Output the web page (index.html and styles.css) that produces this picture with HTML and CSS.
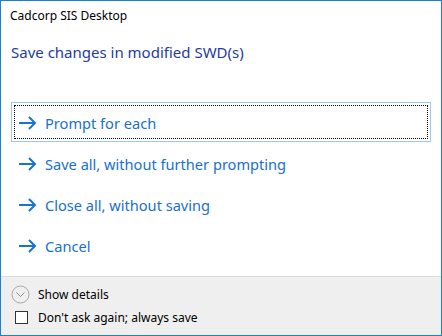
FILE: index.html
```html
<!DOCTYPE html>
<html lang="en">
<head>
    <meta charset="UTF-8">
    <title>Cadcorp SIS Desktop</title>
    <link rel="stylesheet" href="styles.css">
</head>
<body>
    <div class="window">
        <div class="titlebar">Cadcorp SIS Desktop</div>

        <div class="content">
            <h1 class="instruction">Save changes in modified SWD(s)</h1>

            <div class="commands">
                <button class="command focused">
                    <svg class="arrow" width="18" height="14" viewBox="0 0 18 14"><path d="M0 7H16M10 1L16 7L10 13" fill="none" stroke="currentColor" stroke-width="2"/></svg>
                    <span>Prompt for each</span>
                </button>
                <button class="command">
                    <svg class="arrow" width="18" height="14" viewBox="0 0 18 14"><path d="M0 7H16M10 1L16 7L10 13" fill="none" stroke="currentColor" stroke-width="2"/></svg>
                    <span>Save all, without further prompting</span>
                </button>
                <button class="command">
                    <svg class="arrow" width="18" height="14" viewBox="0 0 18 14"><path d="M0 7H16M10 1L16 7L10 13" fill="none" stroke="currentColor" stroke-width="2"/></svg>
                    <span>Close all, without saving</span>
                </button>
                <button class="command">
                    <svg class="arrow" width="18" height="14" viewBox="0 0 18 14"><path d="M0 7H16M10 1L16 7L10 13" fill="none" stroke="currentColor" stroke-width="2"/></svg>
                    <span>Cancel</span>
                </button>
            </div>
        </div>

        <div class="footer">
            <div class="footer-row">
                <svg class="expander" width="19" height="19" viewBox="0 0 19 19">
                    <circle cx="9.5" cy="9.5" r="8.5" fill="none" stroke="#a8a8a8" stroke-width="1"/>
                    <path d="M5.5 7.5L9.5 11.5L13.5 7.5" fill="none" stroke="#8c8c8c" stroke-width="1"/>
                </svg>
                <span>Show details</span>
            </div>
            <label class="footer-row">
                <span class="checkbox"></span>
                <span>Don't ask again; always save</span>
            </label>
        </div>
    </div>
</body>
</html>
```

FILE: styles.css
```css
* {
    margin: 0;
    padding: 0;
    box-sizing: border-box;
}

body {
    font-family: "Noto Sans", "Open Sans", sans-serif;
    background: #ffffff;
}

.window {
    width: 442px;
    height: 336px;
    border: 1px solid #1c80d4;
    background: #ffffff;
    display: flex;
    flex-direction: column;
}

.titlebar {
    height: 29px;
    padding: 6px 0 0 9px;
    font-size: 12px;
    color: #000000;
}

.content {
    flex: 1;
    padding: 0 10px 0 10px;
}

.instruction {
    font-size: 15px;
    font-weight: normal;
    color: #1e3c9e;
    padding-top: 12px;
    height: 72px;
}

.commands {
    display: flex;
    flex-direction: column;
    gap: 1px;
}

.command {
    height: 40px;
    display: flex;
    align-items: center;
    gap: 8px;
    padding: 2px 0 0 7px;
    border: 1px solid transparent;
    background: none;
    font-family: inherit;
    font-size: 14.6px;
    color: #1a6fcf;
    text-align: left;
    position: relative;
}

.command.focused {
    border-color: #99c9f0;
}

.command.focused::after {
    content: "";
    position: absolute;
    top: 2px;
    left: 2px;
    right: 2px;
    bottom: 2px;
    border: 1px dotted #000000;
}

.arrow {
    color: #1a73d2;
    flex-shrink: 0;
}

.footer {
    height: 59px;
    background: #efefef;
    border-top: 1px solid #dcdcdc;
    padding: 6px 0 0 10px;
    font-size: 12px;
    color: #000000;
}

.footer-row {
    display: flex;
    align-items: center;
    gap: 8px;
    height: 23px;
}

.expander {
    flex-shrink: 0;
}

.checkbox {
    width: 13px;
    height: 13px;
    border: 1px solid #333333;
    background: #ffffff;
    margin: 0 2px 0 4px;
    flex-shrink: 0;
}
```
